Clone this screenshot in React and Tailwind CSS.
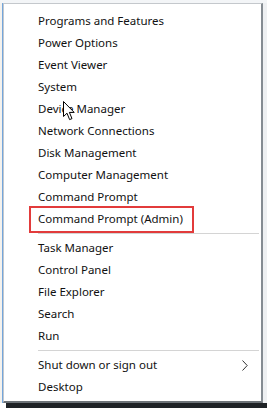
import React from 'react';

const groups = [
    [
        'Programs and Features',
        'Power Options',
        'Event Viewer',
        'System',
        'Device Manager',
        'Network Connections',
        'Disk Management',
        'Computer Management',
        'Command Prompt',
        'Command Prompt (Admin)',
    ],
    ['Task Manager', 'Control Panel', 'File Explorer', 'Search', 'Run'],
    ['Shut down or sign out', 'Desktop'],
];

const MenuItem = ({ label }) => (
    <div className="relative h-[22px] flex items-center pl-[34px] pr-3 text-[11.5px] text-[#111] leading-none">
        <span>{label}</span>
        {label === 'Command Prompt (Admin)' && (
            <span className="absolute left-[25px] top-[-2px] w-[165px] h-[27px] border-2 border-[#e23b3b]" />
        )}
        {label === 'Shut down or sign out' && (
            <svg className="absolute right-[13px] top-[6px]" width="6" height="11" viewBox="0 0 6 11">
                <path d="M0.5 0.5 L5.2 5.5 L0.5 10.5" fill="none" stroke="#333" strokeWidth="1" />
            </svg>
        )}
    </div>
);

const Cursor = () => (
    <svg className="absolute left-[63px] top-[101px]" width="13" height="20" viewBox="0 0 13 20">
        <path
            d="M0.5 0.5 L0.5 15.5 L4 12.2 L6.6 18.6 L9 17.6 L6.4 11.4 L11.2 11.4 Z"
            fill="#fff"
            stroke="#000"
            strokeWidth="1"
            strokeLinejoin="round"
        />
    </svg>
);

const App = () => {
    return (
        <div
            className="relative w-[267px] h-[408px] bg-white flex flex-col overflow-hidden"
            style={{ fontFamily: '"Noto Sans", "Open Sans", Arial, sans-serif' }}
        >
            <div className="h-[3px] bg-[#f3f5f7]" />
            <div className="flex h-[400px]">
                <div className="w-[3px] flex">
                    <div className="w-[2px] bg-[#f4f2ee]" />
                    <div className="w-[1px] bg-[#74a6dc]" />
                </div>
                <div className="w-[260px] bg-white border-l border-t border-[#c4c8cc] border-r-[2px] border-r-[#858c92] border-b-[2px] border-b-[#6d7378] pt-[6px]">
                    {groups.map((group, gi) => (
                        <div key={gi}>
                            {gi > 0 && (
                                <div className="h-[7px] flex items-center ml-[34px] mr-[2px]">
                                    <div className="h-px w-full bg-[#d4d4d4]" />
                                </div>
                            )}
                            {group.map(label => (
                                <MenuItem key={label} label={label} />
                            ))}
                        </div>
                    ))}
                </div>
                <div className="flex-1 bg-[#eef0f2]" />
            </div>
            <div className="flex-1 flex">
                <div className="w-[6px] bg-white" />
                <div className="flex-1 bg-[#1e2226]" />
            </div>
            <Cursor />
        </div>
    );
};

export default App;
